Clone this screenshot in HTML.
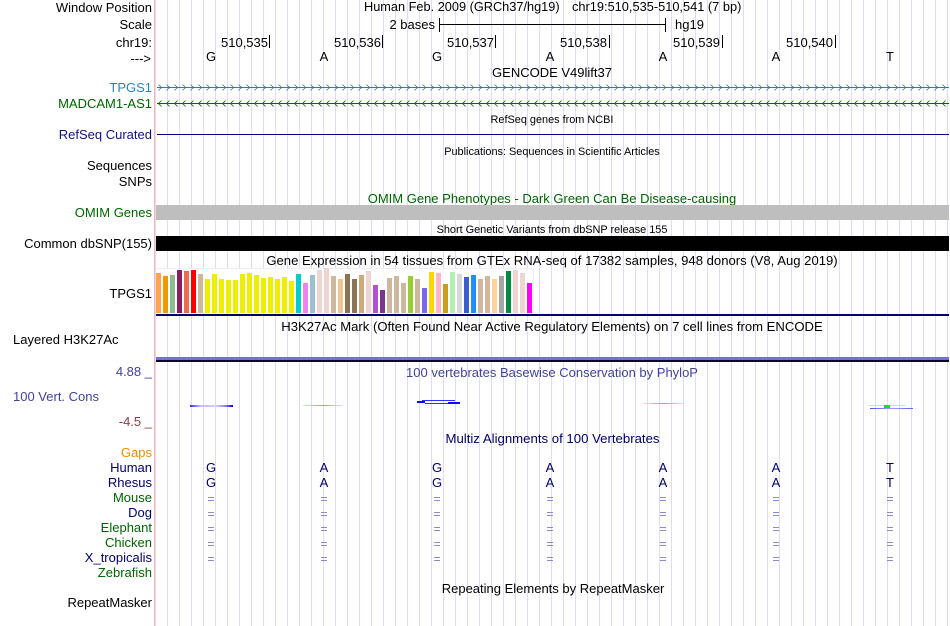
<!DOCTYPE html>
<html><head><meta charset="utf-8"><style>
html,body{margin:0;padding:0;background:#fff;width:950px;height:626px;overflow:hidden}
svg{display:block}
text{font-family:"Liberation Sans",sans-serif;font-size:13px;fill:#000}
.r{text-anchor:end}
.c{text-anchor:middle}
.s{font-size:10.9px}
.w{font-size:13.1px}
</style></head><body>
<svg width="950" height="626" viewBox="0 0 950 626" xmlns="http://www.w3.org/2000/svg">
<defs>
<pattern id="g" x="167" y="0" width="12" height="626" patternUnits="userSpaceOnUse"><rect width="1" height="626" fill="#dcdcf5"/></pattern>
<pattern id="ch" x="157" y="83" width="8" height="9" patternUnits="userSpaceOnUse"><path d="M1.5 1.5 L4.5 4.5 L1.5 7.5" fill="none" stroke="#2a7ab5" stroke-width=".8"/></pattern>
<pattern id="cg" x="157" y="99" width="8" height="9" patternUnits="userSpaceOnUse"><path d="M4.5 1.5 L1.5 4.5 L4.5 7.5" fill="none" stroke="#006400" stroke-width=".8"/></pattern>
<linearGradient id="b1"><stop offset="0" stop-color="#3030ee"/><stop offset=".25" stop-color="#c0c0ff"/><stop offset=".6" stop-color="#d0d0ff"/><stop offset=".8" stop-color="#9090f0"/><stop offset="1" stop-color="#0808cc"/></linearGradient>
<linearGradient id="r1"><stop offset="0" stop-color="#ffd8d8"/><stop offset=".5" stop-color="#f08080"/><stop offset="1" stop-color="#ffd8d8"/></linearGradient>
<linearGradient id="b2"><stop offset="0" stop-color="#5050f0"/><stop offset=".5" stop-color="#a0a0ff"/><stop offset="1" stop-color="#6060f0"/></linearGradient>
</defs>
<rect x="155" width="795" height="626" fill="url(#g)"/>
<rect x="154" width="1" height="626" fill="#ffb0b0"/>

<!-- header -->
<text class="r" x="152" y="12">Window Position</text>
<text class="r" x="152" y="29">Scale</text>
<text class="r" x="152" y="47">chr19:</text>
<text class="r" x="151" y="63">---&gt;</text>
<text x="364" y="11" style="font-size:12.75px">Human Feb. 2009 (GRCh37/hg19)</text>
<text x="572" y="11" style="font-size:12.8px">chr19:510,535-510,541 (7 bp)</text>
<text class="r" x="435" y="29">2 bases</text>
<text x="675" y="29">hg19</text>
<path d="M439.5 18V32M439.5 24.5H665.5M665.5 18V32" stroke="#000" fill="none"/>
<text class="r" x="268" y="47">510,535</text>
<text class="r" x="381" y="47">510,536</text>
<text class="r" x="494" y="47">510,537</text>
<text class="r" x="607" y="47">510,538</text>
<text class="r" x="720" y="47">510,539</text>
<text class="r" x="833" y="47">510,540</text>
<path d="M269.5 35V48M382.5 35V48M495.5 35V48M609.5 35V48M722.5 35V48M835.5 35V48" stroke="#000" fill="none"/>
<text class="c" x="211" y="61">G</text><text class="c" x="324" y="61">A</text><text class="c" x="437" y="61">G</text><text class="c" x="550" y="61">A</text><text class="c" x="663" y="61">A</text><text class="c" x="776" y="61">A</text><text class="c" x="890" y="61">T</text>

<text class="c" x="552" y="77">GENCODE V49lift37</text>
<text class="r" x="152" y="92" style="fill:#2a86c0">TPGS1</text>
<rect x="157" y="87" width="792" height="1" fill="#2a7ab5"/>
<rect x="157" y="83" width="792" height="9" fill="url(#ch)"/>
<text class="r" x="152" y="108" style="fill:#006400">MADCAM1-AS1</text>
<rect x="157" y="103" width="792" height="1" fill="#006400"/>
<rect x="157" y="99" width="792" height="9" fill="url(#cg)"/>

<text class="c s" x="552" y="123">RefSeq genes from NCBI</text>
<text class="r" x="152" y="139" style="fill:#12127e">RefSeq Curated</text>
<rect x="157" y="134" width="792" height="1" fill="#000080"/>
<text class="c s" x="552" y="155">Publications: Sequences in Scientific Articles</text>
<text class="r" x="152" y="170">Sequences</text>
<text class="r" x="152" y="186">SNPs</text>

<text class="c" x="552" y="203" style="fill:#006400">OMIM Gene Phenotypes - Dark Green Can Be Disease-causing</text>
<text class="r" x="152" y="217" style="fill:#006400">OMIM Genes</text>
<rect x="156" y="205" width="793" height="15" fill="#bebebe"/>
<text class="c s" x="552" y="233">Short Genetic Variants from dbSNP release 155</text>
<text class="r" x="152" y="248">Common dbSNP(155)</text>
<rect x="156" y="236" width="793" height="15" fill="#000"/>

<text class="c w" x="552" y="265">Gene Expression in 54 tissues from GTEx RNA-seq of 17382 samples, 948 donors (V8, Aug 2019)</text>
<text class="r" x="152" y="298">TPGS1</text>
<path d="M156.5 268.5H533.5V313" fill="none" stroke="#eeeef8"/>
<rect x="156" y="269" width="377" height="44" fill="#fff" fill-opacity="0.9"/>
<g>
<rect x="156" y="273" width="5" height="40" fill="#ffa54f"/>
<rect x="163" y="276" width="5" height="37" fill="#ee9a00"/>
<rect x="170" y="275" width="5" height="38" fill="#8fbc8f"/>
<rect x="177" y="270" width="5" height="43" fill="#8b1c62"/>
<rect x="184" y="271" width="5" height="42" fill="#ee6a50"/>
<rect x="191" y="270" width="5" height="43" fill="#ff0000"/>
<rect x="198" y="274" width="5" height="39" fill="#cdb79e"/>
<rect x="205" y="279" width="5" height="34" fill="#eeee00"/>
<rect x="212" y="274" width="5" height="39" fill="#eeee00"/>
<rect x="219" y="279" width="5" height="34" fill="#eeee00"/>
<rect x="226" y="280" width="5" height="33" fill="#eeee00"/>
<rect x="233" y="280" width="5" height="33" fill="#eeee00"/>
<rect x="240" y="274" width="5" height="39" fill="#eeee00"/>
<rect x="247" y="273" width="5" height="40" fill="#eeee00"/>
<rect x="254" y="275" width="5" height="38" fill="#eeee00"/>
<rect x="261" y="278" width="5" height="35" fill="#eeee00"/>
<rect x="268" y="277" width="5" height="36" fill="#eeee00"/>
<rect x="275" y="279" width="5" height="34" fill="#eeee00"/>
<rect x="282" y="277" width="5" height="36" fill="#eeee00"/>
<rect x="289" y="281" width="5" height="32" fill="#eeee00"/>
<rect x="296" y="274" width="5" height="39" fill="#00cdcd"/>
<rect x="303" y="283" width="5" height="30" fill="#ee82ee"/>
<rect x="310" y="275" width="5" height="38" fill="#9ac0cd"/>
<rect x="317" y="270" width="5" height="43" fill="#eed5d2"/>
<rect x="324" y="268" width="5" height="45" fill="#eed5d2"/>
<rect x="331" y="276" width="5" height="37" fill="#cdb79e"/>
<rect x="338" y="279" width="5" height="34" fill="#eec591"/>
<rect x="345" y="274" width="5" height="39" fill="#8b7355"/>
<rect x="352" y="279" width="5" height="34" fill="#8b7355"/>
<rect x="359" y="275" width="5" height="38" fill="#cdaa7d"/>
<rect x="366" y="271" width="5" height="42" fill="#eed5d2"/>
<rect x="373" y="285" width="5" height="28" fill="#b452cd"/>
<rect x="380" y="290" width="5" height="23" fill="#7a378b"/>
<rect x="387" y="278" width="5" height="35" fill="#cdb79e"/>
<rect x="394" y="276" width="5" height="37" fill="#cdb79e"/>
<rect x="401" y="283" width="5" height="30" fill="#cdb79e"/>
<rect x="408" y="276" width="5" height="37" fill="#9acd32"/>
<rect x="415" y="279" width="5" height="34" fill="#cdb79e"/>
<rect x="422" y="288" width="5" height="25" fill="#7b68ee"/>
<rect x="429" y="272" width="5" height="41" fill="#ffd700"/>
<rect x="436" y="273" width="5" height="40" fill="#ffb5c5"/>
<rect x="443" y="284" width="5" height="29" fill="#cd9b1d"/>
<rect x="450" y="272" width="5" height="41" fill="#b4eeb4"/>
<rect x="457" y="274" width="5" height="39" fill="#d9d9d9"/>
<rect x="464" y="277" width="5" height="36" fill="#3a5fcd"/>
<rect x="471" y="275" width="5" height="38" fill="#1e90ff"/>
<rect x="478" y="279" width="5" height="34" fill="#cdb79e"/>
<rect x="485" y="276" width="5" height="37" fill="#cdb79e"/>
<rect x="492" y="279" width="5" height="34" fill="#ffd39b"/>
<rect x="499" y="276" width="5" height="37" fill="#a6a6a6"/>
<rect x="506" y="271" width="5" height="42" fill="#008b45"/>
<rect x="513" y="270" width="5" height="43" fill="#eed5d2"/>
<rect x="520" y="273" width="5" height="40" fill="#eed5d2"/>
<rect x="527" y="283" width="5" height="30" fill="#ff00ff"/>
</g>
<rect x="156" y="314" width="793" height="2" fill="#000066"/>

<text class="c w" x="552" y="331">H3K27Ac Mark (Often Found Near Active Regulatory Elements) on 7 cell lines from ENCODE</text>
<text x="13" y="344">Layered H3K27Ac</text>
<rect x="156" y="357" width="793" height="3" fill="#7070e0"/>
<rect x="156" y="360" width="793" height="2" fill="#100828"/>

<text class="r" x="152" y="376" style="fill:#43439a">4.88 _</text>
<text class="c" x="552" y="377" style="fill:#43439a">100 vertebrates Basewise Conservation by PhyloP</text>
<text x="13" y="401" style="fill:#43439a">100 Vert. Cons</text>
<text class="r" x="152" y="426" style="fill:#8a3f3f">-4.5 _</text>
<rect x="190" y="405" width="43" height="2" fill="url(#b1)"/>
<rect x="303" y="405" width="40" height="1" fill="url(#r1)"/>
<path d="M422 400.5H455M425 403.5H460" stroke="#3030ff" fill="none"/>
<rect x="417" y="401" width="8" height="2" fill="#0a0aff"/>
<rect x="448" y="402" width="12" height="2" fill="#0a0aff"/>
<rect x="643" y="403" width="40" height="1" fill="url(#r1)"/>
<rect x="868" y="405" width="38" height="1" fill="#c0f0c0"/>
<rect x="884" y="405" width="6" height="3" fill="#00ee00"/>
<rect x="870" y="408" width="43" height="1" fill="url(#b2)"/>

<text class="c" x="552.5" y="443" style="fill:#000066;font-size:13.2px">Multiz Alignments of 100 Vertebrates</text>
<text class="r" x="152" y="457" style="fill:#ee8c00">Gaps</text>
<text class="r" x="152" y="472" style="fill:#000066">Human</text>
<text class="r" x="152" y="487" style="fill:#000066">Rhesus</text>
<text class="r" x="152" y="502" style="fill:#006400">Mouse</text>
<text class="r" x="152" y="517" style="fill:#000066">Dog</text>
<text class="r" x="152" y="532" style="fill:#006400">Elephant</text>
<text class="r" x="152" y="547" style="fill:#006400">Chicken</text>
<text class="r" x="152" y="562" style="fill:#000066">X_tropicalis</text>
<text class="r" x="152" y="577" style="fill:#006400">Zebrafish</text>
<g>
<text class="c" x="211" y="472" style="fill:#000066">G</text><text class="c" x="324" y="472" style="fill:#000066">A</text><text class="c" x="437" y="472" style="fill:#000066">G</text><text class="c" x="550" y="472" style="fill:#000066">A</text><text class="c" x="663" y="472" style="fill:#000066">A</text><text class="c" x="776" y="472" style="fill:#000066">A</text><text class="c" x="890" y="472" style="fill:#000066">T</text>
<text class="c" x="211" y="487" style="fill:#000066">G</text><text class="c" x="324" y="487" style="fill:#000066">A</text><text class="c" x="437" y="487" style="fill:#000066">G</text><text class="c" x="550" y="487" style="fill:#000066">A</text><text class="c" x="663" y="487" style="fill:#000066">A</text><text class="c" x="776" y="487" style="fill:#000066">A</text><text class="c" x="890" y="487" style="fill:#000066">T</text>
</g>
<g id="eq" fill="none" stroke="#8c8cc8">
<path d="M208 497.5h6M208 500.5h6M321 497.5h6M321 500.5h6M434 497.5h6M434 500.5h6M547 497.5h6M547 500.5h6M660 497.5h6M660 500.5h6M773 497.5h6M773 500.5h6M887 497.5h6M887 500.5h6"/>
<path d="M208 512.5h6M208 515.5h6M321 512.5h6M321 515.5h6M434 512.5h6M434 515.5h6M547 512.5h6M547 515.5h6M660 512.5h6M660 515.5h6M773 512.5h6M773 515.5h6M887 512.5h6M887 515.5h6"/>
<path d="M208 527.5h6M208 530.5h6M321 527.5h6M321 530.5h6M434 527.5h6M434 530.5h6M547 527.5h6M547 530.5h6M660 527.5h6M660 530.5h6M773 527.5h6M773 530.5h6M887 527.5h6M887 530.5h6"/>
<path d="M208 542.5h6M208 545.5h6M321 542.5h6M321 545.5h6M434 542.5h6M434 545.5h6M547 542.5h6M547 545.5h6M660 542.5h6M660 545.5h6M773 542.5h6M773 545.5h6M887 542.5h6M887 545.5h6"/>
<path d="M208 557.5h6M208 560.5h6M321 557.5h6M321 560.5h6M434 557.5h6M434 560.5h6M547 557.5h6M547 560.5h6M660 557.5h6M660 560.5h6M773 557.5h6M773 560.5h6M887 557.5h6M887 560.5h6"/>
</g>
<text class="c" x="553" y="593">Repeating Elements by RepeatMasker</text>
<text class="r" x="152" y="607">RepeatMasker</text>
</svg>
</body></html>
